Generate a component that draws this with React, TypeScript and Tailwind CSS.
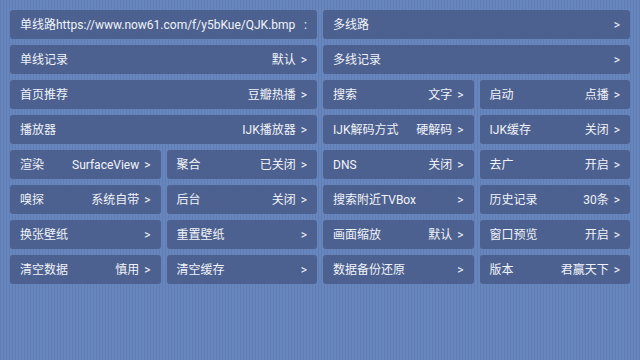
import React from 'react';

type Item = { label: string; value?: string; span?: 2 | 4; arrow?: string };

const items: Item[] = [
  { label: '单线路https://www.now61.com/f/y5bKue/QJK.bmp', arrow: ':', span: 2 },
  { label: '多线路', span: 2 },
  { label: '单线记录', value: '默认', span: 2 },
  { label: '多线记录', span: 2 },
  { label: '首页推荐', value: '豆瓣热播', span: 2 },
  { label: '搜索', value: '文字' },
  { label: '启动', value: '点播' },
  { label: '播放器', value: 'IJK播放器', span: 2 },
  { label: 'IJK解码方式', value: '硬解码' },
  { label: 'IJK缓存', value: '关闭' },
  { label: '渲染', value: 'SurfaceView' },
  { label: '聚合', value: '已关闭' },
  { label: 'DNS', value: '关闭' },
  { label: '去广', value: '开启' },
  { label: '嗅探', value: '系统自带' },
  { label: '后台', value: '关闭' },
  { label: '搜索附近TVBox' },
  { label: '历史记录', value: '30条' },
  { label: '换张壁纸' },
  { label: '重置壁纸' },
  { label: '画面缩放', value: '默认' },
  { label: '窗口预览', value: '开启' },
  { label: '清空数据', value: '慎用' },
  { label: '清空缓存' },
  { label: '数据备份还原' },
  { label: '版本', value: '君赢天下' },
];

function Row({ item }: { item: Item }) {
  return (
    <div
      className={
        'flex items-center justify-between rounded-[3px] bg-[#4d6190] pl-[10px] pr-[10px] text-[12px] text-[#f0f3f8] ' +
        (item.span === 2 ? 'col-span-2' : 'col-span-1')
      }
    >
      <span className="whitespace-nowrap">{item.label}</span>
      <span className="flex items-center gap-[5px] whitespace-nowrap">
        {item.value && <span>{item.value}</span>}
        <span>{item.arrow ?? '>'}</span>
      </span>
    </div>
  );
}

export default function App() {
  return (
    <div
      className="h-[360px] w-[640px] overflow-hidden bg-[#6786bd] bg-[repeating-linear-gradient(90deg,rgba(40,60,110,0.10)_0px,rgba(40,60,110,0.10)_1px,transparent_1px,transparent_3px)] p-[10px]"
      style={{ fontFamily: 'Roboto, "Noto Sans CJK SC", sans-serif' }}
    >
      <div className="grid grid-cols-4 auto-rows-[29px] gap-x-[6px] gap-y-[6px]">
        {items.map((it, i) => (
          <Row key={i} item={it} />
        ))}
      </div>
    </div>
  );
}
